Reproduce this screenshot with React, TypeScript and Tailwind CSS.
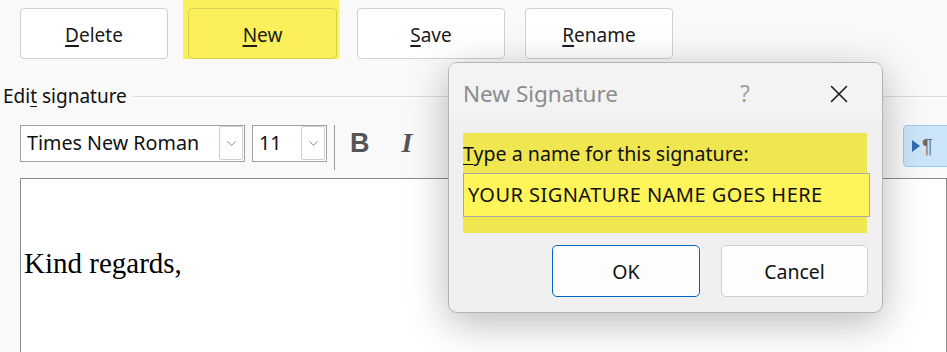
import { ChevronDown, X } from "lucide-react";

const ui = "font-['Noto_Sans',sans-serif]";

function Btn({ label, u, className = "" }: { label: string; u: number; className?: string }) {
  return (
    <button
      className={`h-[51px] w-[148px] rounded-[4px] border border-[#d0d0d0] pt-[3px] text-[19px] text-[#1a1a1a] ${className}`}
    >
      {label.slice(0, u)}
      <span className="underline underline-offset-[3px] decoration-[2px]">{label[u]}</span>
      {label.slice(u + 1)}
    </button>
  );
}

function Select({ value, width }: { value: string; width: string }) {
  return (
    <div className={`flex h-[37px] ${width} items-center border border-[#a0a0a0] bg-white pl-[6px] pr-[1px]`}>
      <span className="flex-1 text-[19.7px] text-[#111]">{value}</span>
      <span className="flex h-[34px] w-[24px] items-center justify-center rounded-[2px] border border-[#cfcfcf]">
        <ChevronDown size={15} strokeWidth={1.1} className="text-[#555]" />
      </span>
    </div>
  );
}

export default function App() {
  return (
    <div className={`relative h-[352px] w-[947px] overflow-hidden bg-[#f9f9f9] ${ui}`}>
      {/* boutons du haut */}
      <div className="flex items-end gap-[20px] pl-[20px]">
        <Btn label="Delete" u={0} className="bg-white" />
        <div className="-ml-[5px] -mr-[2px] flex h-[59px] items-end bg-[#fcf05a] pl-[5px] pr-[2px]">
          <Btn label="New" u={0} className="w-[149px] border-[#d8cf55] bg-[#fcf05a]" />
        </div>
        <Btn label="Save" u={0} className="w-[147px] bg-white" />
        <Btn label="Rename" u={0} className="bg-white" />
      </div>

      {/* Edit signature */}
      <div className="mt-[23px] flex items-center pl-[3px]">
        <span className="text-[19px] text-[#111]">
          Edi<span className="underline underline-offset-[3px]">t</span> signature
        </span>
        <div className="ml-[6px] h-px flex-1 bg-[#dcdcdc]" />
      </div>

      {/* barre d'outils */}
      <div className="mt-[14px] flex items-start pl-[20px]">
        <Select value="Times New Roman" width="w-[225px]" />
        <div className="ml-[7px]">
          <Select value="11" width="w-[75px]" />
        </div>
        <div className="ml-[7px] h-[45px] w-px bg-[#9a9a9a]" />
        <span className="ml-[15px] mt-[1px] font-['Liberation_Sans',sans-serif] text-[27px] font-bold leading-[34px] text-[#555]">
          B
        </span>
        <span className="ml-[32px] mt-[1px] font-['Liberation_Serif',serif] text-[28px] font-bold italic leading-[34px] text-[#555]">
          I
        </span>
        <div className="flex-1" />
        <div className="flex h-[42px] w-[50px] -mr-[6px] items-center rounded-[4px] border border-[#99c9ef] bg-[#cce4f7] pl-[7px]">
          <svg width="10" height="14" viewBox="0 0 10 14">
            <path d="M1 1 L9 7 L1 13 Z" fill="#2e6db4" />
          </svg>
          <span className="ml-[1px] font-['Liberation_Sans',sans-serif] text-[20px] leading-none text-[#6b6b6b]">¶</span>
        </div>
      </div>

      {/* zone d'édition */}
      <div className="ml-[20px] mt-[8px] h-[200px] border border-[#8a8a8a] bg-white pl-[3px] pt-[66px]">
        <p className="font-['Liberation_Serif',serif] text-[29px] leading-[36px] text-black">Kind regards,</p>
      </div>

      {/* boîte de dialogue */}
      <div className="absolute left-[448px] top-[62px] flex h-[251px] w-[435px] flex-col overflow-hidden rounded-[9px] border border-[#b4b4b4] bg-[#f0f0f0] shadow-[0_10px_40px_rgba(0,0,0,0.28)]">
        <div className="flex h-[56px] items-center bg-[#f3f3f3] pl-[14px] pt-[5px]">
          <span className="text-[22.5px] text-[#8c8c8c]">New Signature</span>
          <span className="ml-[122px] text-[23px] text-[#a0a0a0]">?</span>
          <X size={30} strokeWidth={1.3} className="ml-[74px] text-[#1a1a1a]" />
        </div>
        <div className="ml-[14px] mt-[14px] h-[100px] w-[404px] bg-[#f0e650]">
          <p className="pt-[8px] text-[19.6px] leading-[26px] text-[#111]">
            <span className="underline underline-offset-[3px]">T</span>ype a name for this signature:
          </p>
          <div className="mt-[6px] flex h-[44px] w-[407px] items-center border border-[#a8a8a8] bg-[#fff45a] pl-[4px]">
            <span className="text-[20px] tracking-[0.45px] text-[#111]">YOUR SIGNATURE NAME GOES HERE</span>
          </div>
        </div>
        <div className="mt-[12px] flex justify-end gap-[21px] pr-[14px]">
          <button className="h-[52px] w-[148px] rounded-[5px] border border-[#0067c0] bg-[#fdfdfd] pt-[2px] text-[19.5px] text-[#111]">
            OK
          </button>
          <button className="h-[52px] w-[147px] rounded-[5px] border border-[#d0d0d0] bg-[#fdfdfd] pt-[2px] text-[19.5px] text-[#111]">
            Cancel
          </button>
        </div>
      </div>
    </div>
  );
}
